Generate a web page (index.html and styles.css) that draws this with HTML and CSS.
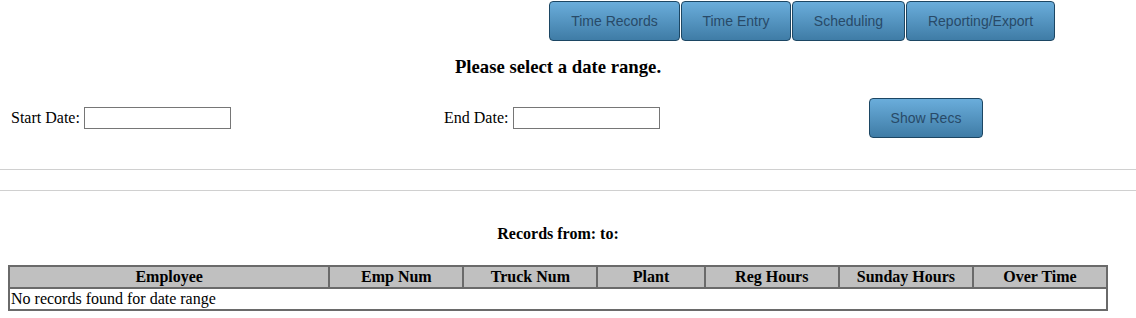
FILE: index.html
```html
<!DOCTYPE html>
<html lang="en">
<head>
<meta charset="UTF-8" />
<title>Time Records</title>
<link rel="stylesheet" href="styles.css">
</head>
<body>
  <div class="nav">
    <a class="nav-btn btn-records" href="#">Time Records</a>
    <a class="nav-btn btn-entry" href="#">Time Entry</a>
    <a class="nav-btn btn-sched" href="#">Scheduling</a>
    <a class="nav-btn btn-report" href="#">Reporting/Export</a>
  </div>

  <h3 class="title">Please select a date range.</h3>

  <form class="range-row" onsubmit="return false;">
    <div class="field">
      <label for="start">Start Date:</label>
      <input type="text" id="start" class="date-input" />
    </div>
    <div class="field">
      <label for="end">End Date:</label>
      <input type="text" id="end" class="date-input" />
    </div>
    <div class="field">
      <button type="submit" class="nav-btn show-btn">Show Recs</button>
    </div>
  </form>

  <hr class="rule first" />
  <hr class="rule" />

  <h4 class="records-title">Records from: to:</h4>

  <table class="records">
    <thead>
      <tr>
        <th class="col-emp">Employee</th>
        <th class="col-num">Emp Num</th>
        <th class="col-num">Truck Num</th>
        <th class="col-plant">Plant</th>
        <th class="col-num">Reg Hours</th>
        <th class="col-num">Sunday Hours</th>
        <th class="col-num">Over Time</th>
      </tr>
    </thead>
    <tbody>
      <tr>
        <td colspan="7">No records found for date range</td>
      </tr>
    </tbody>
  </table>
</body>
</html>
```

FILE: styles.css
```css
html, body {
  margin: 0;
  padding: 0;
  font-family: "Liberation Serif", "Times New Roman", serif;
  font-size: 16px;
  color: #000;
  background: #fff;
}

.nav {
  display: flex;
  justify-content: flex-end;
  gap: 1px;
  padding: 1px 81px 0 0;
}

.nav-btn {
  display: inline-flex;
  align-items: center;
  justify-content: center;
  box-sizing: border-box;
  height: 40px;
  padding: 0;
  border: 1px solid #1c4663;
  border-radius: 4px;
  background: linear-gradient(to bottom, #6aaddb, #3f7ca6);
  color: #284a68;
  font-family: "Liberation Sans", Arial, sans-serif;
  font-size: 14px;
  text-decoration: none;
  cursor: pointer;
}

.btn-records { width: 131px; }
.btn-entry { width: 110px; }
.btn-sched { width: 113px; }
.btn-report { width: 149px; }

.title {
  margin: 15px 0 0;
  padding-right: 20px;
  text-align: center;
  font-size: 18.72px;
  line-height: 22px;
  font-weight: bold;
}

.range-row {
  display: grid;
  grid-template-columns: 433px 425px auto;
  align-items: center;
  margin: 20px 0 0;
  padding-left: 11px;
  height: 40px;
}

.field {
  display: flex;
  align-items: center;
}

.field label {
  margin-right: 4px;
}

.field + .field label {
  margin-right: 5px;
}

.date-input {
  box-sizing: border-box;
  width: 147px;
  height: 22px;
  margin: 0;
  padding: 1px 2px;
  border: 1px solid #767676;
  font-size: 13px;
}

.show-btn {
  width: 114px;
}

.rule {
  margin: 0;
  border: none;
  border-top: 1px solid #d0d0d0;
}

.rule.first {
  margin-top: 31px;
}

.rule + .rule {
  margin-top: 20px;
}

.records-title {
  margin: 32px 0 0;
  padding-right: 20px;
  text-align: center;
  font-size: 16px;
  line-height: 22px;
  font-weight: bold;
}

.records {
  width: 1100px;
  margin: 20px 0 0 8px;
  border: 1px solid #6a6a6a;
  border-spacing: 0;
}

.records th,
.records td {
  border: 1px solid #6a6a6a;
  padding: 0 1px;
  height: 20px;
  line-height: 18px;
}

.records th {
  background: #c0c0c0;
  font-weight: bold;
  text-align: center;
}

.records td {
  text-align: left;
}

.col-emp { width: 319px; }
.col-num { width: 131px; }
.col-plant { width: 104px; }
```
